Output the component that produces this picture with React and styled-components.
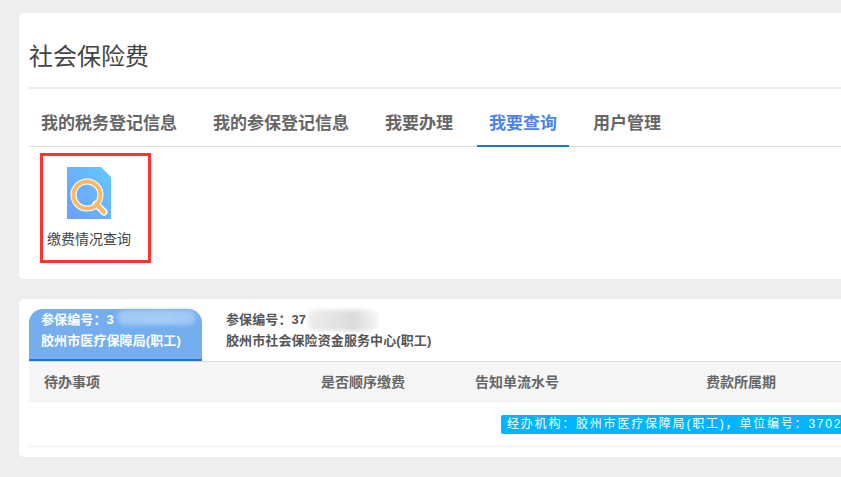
import React from "react";
import styled, { createGlobalStyle } from "styled-components";

const GlobalStyle = createGlobalStyle`
  html, body {
    margin: 0;
    height: 100%;
    overflow: hidden;
    background: #eeeeee;
    font-family: "Liberation Sans", "Noto Sans CJK SC", sans-serif;
  }
`;

const Page = styled.div`
  padding: 13px 0 0 19px;
  display: flex;
  flex-direction: column;
  gap: 20px;
`;

const Card = styled.section`
  background: #ffffff;
  border-radius: 5px 0 0 5px;
  padding: 0 0 0 10px;
  height: ${(p) => p.$height}px;
  box-sizing: border-box;
  overflow: hidden;
`;

const Title = styled.h1`
  margin: 0;
  height: 76px;
  box-sizing: border-box;
  padding-top: 26px;
  border-bottom: 2px solid #eeeeee;
  font-size: 24px;
  line-height: 36px;
  font-weight: 400;
  color: #444444;
`;

const TabBar = styled.div`
  display: flex;
  gap: 12px;
  height: 58px;
  box-sizing: border-box;
  border-bottom: 1px solid #dddddd;
`;

const Tab = styled.div`
  padding: 0 12px;
  height: 58px;
  box-sizing: border-box;
  line-height: 70px;
  font-size: 17px;
  font-weight: 700;
  color: ${(p) => (p.$active ? "#4a84ee" : "#666666")};
  border-bottom: 2px solid ${(p) => (p.$active ? "#1a73e0" : "transparent")};
`;

const Highlight = styled.div`
  width: 111px;
  height: 110px;
  box-sizing: border-box;
  margin: 6px 0 0 11px;
  border: 3px solid #ff3333;
  padding: 11px 0 0 4px;
`;

const IconSlot = styled.div`
  height: 52px;
  padding-left: 20px;
`;

const ItemLabel = styled.div`
  margin-top: 9px;
  font-size: 14px;
  line-height: 22px;
  color: #444444;
  white-space: nowrap;
`;

const Tabs2 = styled.div`
  display: flex;
  gap: 12px;
  padding-top: 10px;
`;

const OrgTab = styled.div`
  width: ${(p) => p.$width}px;
  height: 52px;
  box-sizing: border-box;
  padding: 0 12px;
  border-radius: 14px 14px 0 0;
  background: ${(p) => (p.$active ? "#74aeee" : "transparent")};
  border-bottom: 2px solid ${(p) => (p.$active ? "#1a73e0" : "transparent")};
  color: ${(p) => (p.$active ? "#ffffff" : "#555555")};
  font-size: 13px;
  font-weight: 700;
  line-height: 21px;
  letter-spacing: 0.1px;
  white-space: nowrap;
`;

const OrgLine = styled.div`
  position: relative;
`;

const Smudge = styled.span`
  position: absolute;
  left: ${(p) => p.$left}px;
  top: ${(p) => p.$top}px;
  width: ${(p) => p.$width}px;
  height: ${(p) => p.$h}px;
  border-radius: 8px;
  filter: blur(2px);
  background: ${(p) =>
    p.$light
      ? "linear-gradient(90deg, #9fc8f5, #a6ccf6 60%, #9cc5f3)"
      : "linear-gradient(90deg, #ececec, #e0e0e0 50%, #dbd9d9 65%, #f6f6f6)"};
`;

const HeadRow = styled.div`
  display: grid;
  grid-template-columns: 277px 154px 231px 1fr;
  height: 41px;
  box-sizing: border-box;
  background: #f6f6f6;
  border-top: 1px solid #dddddd;
  border-bottom: 1px solid #eeeeee;
`;

const HeadCell = styled.div`
  padding-left: 15px;
  font-size: 14px;
  font-weight: 700;
  line-height: 40px;
  color: #666666;
`;

const BodyRow = styled.div`
  height: 45px;
  box-sizing: border-box;
  border-bottom: 1px solid #eeeeee;
  display: flex;
  align-items: center;
  padding-left: 472px;
`;

const Notice = styled.div`
  flex: 1;
  height: 19px;
  padding-left: 6px;
  border-radius: 2px 0 0 2px;
  background: #00b4ff;
  color: #ffffff;
  font-size: 12px;
  line-height: 19px;
  letter-spacing: 1.8px;
  white-space: nowrap;
`;

const QueryIcon = () => (
  <svg width="44" height="52" viewBox="0 0 44 52">
    <defs>
      <linearGradient id="docFill" x1="0" y1="1" x2="1" y2="0">
        <stop offset="0" stopColor="#6e9dff" />
        <stop offset="1" stopColor="#63c8ff" />
      </linearGradient>
    </defs>
    <path d="M0 0H34L44 10V52H0Z" fill="url(#docFill)" />
    <path d="M29 37L37 45" stroke="#ffffff" strokeWidth="7" strokeLinecap="round" />
    <circle cx="20" cy="28" r="13.5" fill="none" stroke="#ffffff" strokeWidth="6" />
    <circle cx="20" cy="28" r="13.5" fill="none" stroke="#fdb863" strokeWidth="4" />
    <path d="M29.5 37.5L37 45" stroke="#fdb863" strokeWidth="4.5" strokeLinecap="round" />
  </svg>
);

const mainTabs = ["我的税务登记信息", "我的参保登记信息", "我要办理", "我要查询", "用户管理"];
const columns = ["待办事项", "是否顺序缴费", "告知单流水号", "费款所属期"];

export default function App() {
  return (
    <>
      <GlobalStyle />
      <Page>
        <Card $height={266}>
          <Title>社会保险费</Title>
          <TabBar>
            {mainTabs.map((t) => (
              <Tab key={t} $active={t === "我要查询"}>
                {t}
              </Tab>
            ))}
          </TabBar>
          <Highlight>
            <IconSlot>
              <QueryIcon />
            </IconSlot>
            <ItemLabel>缴费情况查询</ItemLabel>
          </Highlight>
        </Card>
        <Card $height={158}>
          <Tabs2>
            <OrgTab $active $width={173}>
              <OrgLine>
                参保编号：3
                <Smudge $light $left={76} $top={1} $width={79} $h={15} />
              </OrgLine>
              <OrgLine>胶州市医疗保障局(职工)</OrgLine>
            </OrgTab>
            <OrgTab $width={230}>
              <OrgLine>
                参保编号：37
                <Smudge $left={82} $top={1} $width={70} $h={21} />
              </OrgLine>
              <OrgLine>胶州市社会保险资金服务中心(职工)</OrgLine>
            </OrgTab>
          </Tabs2>
          <HeadRow>
            {columns.map((c) => (
              <HeadCell key={c}>{c}</HeadCell>
            ))}
          </HeadRow>
          <BodyRow>
            <Notice>经办机构：胶州市医疗保障局(职工)，单位编号：3702</Notice>
          </BodyRow>
        </Card>
      </Page>
    </>
  );
}
